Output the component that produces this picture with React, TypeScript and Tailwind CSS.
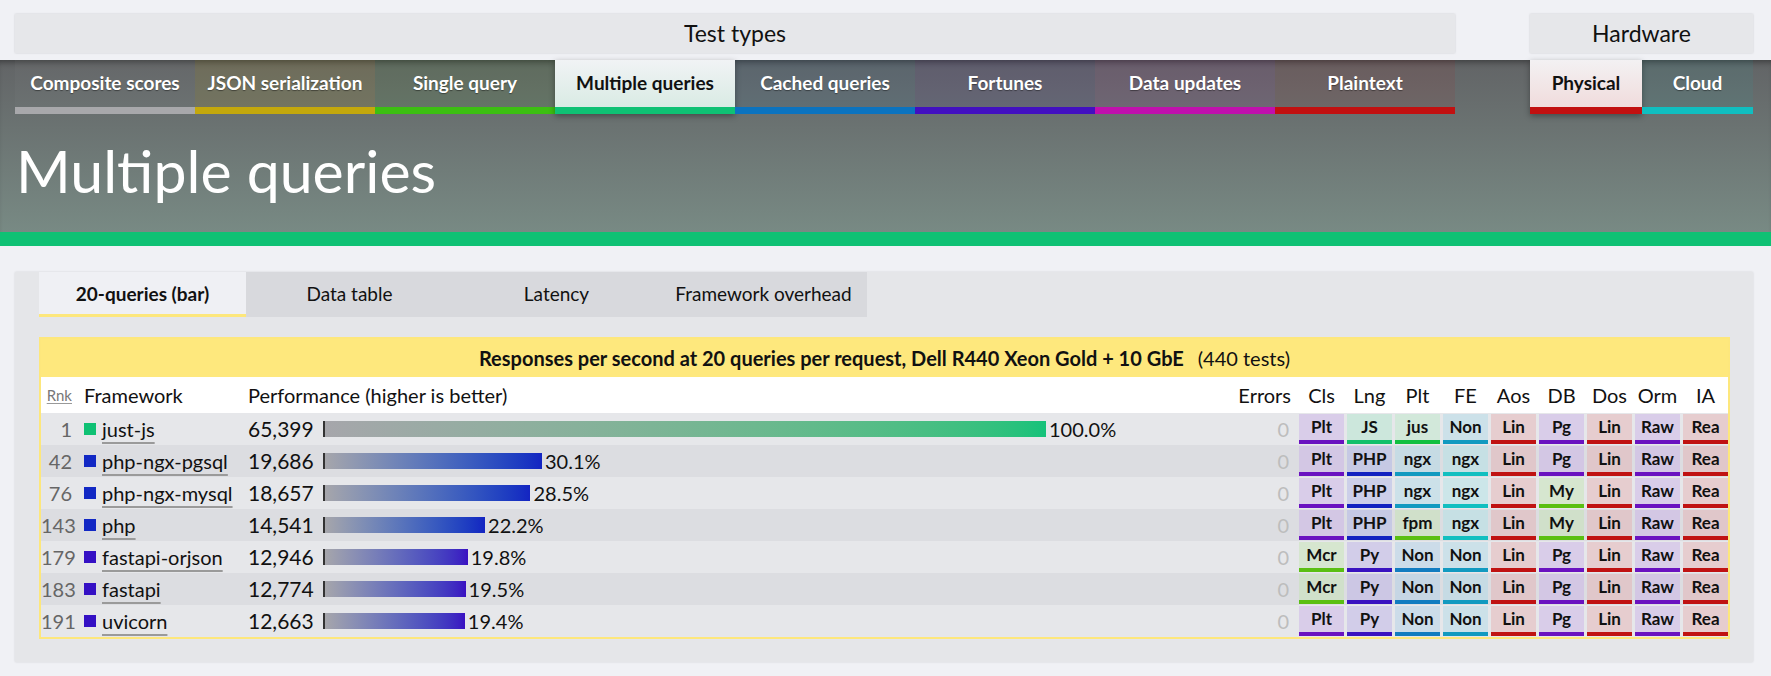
import React from 'react';

type Tab = { label: string; bar: string; bg: string; active?: boolean };

const testTabs: Tab[] = [
  { label: 'Composite scores', bar: 'border-[#a8a8ab]', bg: 'bg-[#a8a8ab]/5' },
  { label: 'JSON serialization', bar: 'border-[#c4a80c]', bg: 'bg-[#c4a80c]/12' },
  { label: 'Single query', bar: 'border-[#3cbf12]', bg: 'bg-[#3cbf12]/8' },
  { label: 'Multiple queries', bar: 'border-[#0fc174]', bg: '', active: true },
  { label: 'Cached queries', bar: 'border-[#0b73bf]', bg: 'bg-[#0b73bf]/8' },
  { label: 'Fortunes', bar: 'border-[#4210c0]', bg: 'bg-[#4210c0]/8' },
  { label: 'Data updates', bar: 'border-[#c010ad]', bg: 'bg-[#c010ad]/8' },
  { label: 'Plaintext', bar: 'border-[#c21010]', bg: 'bg-[#c21010]/8' },
];

// badge colours: [background tint, bottom bar]
const badge: Record<string, string> = {
  purple: 'bg-[#6a12c0]/15 border-[#6a12c0]',
  red: 'bg-[#c01212]/15 border-[#c01212]',
  js: 'bg-[#12c06a]/15 border-[#12c06a]',
  jus: 'bg-[#12c040]/12 border-[#12c040]',
  php: 'bg-[#1222c0]/15 border-[#1222c0]',
  py: 'bg-[#3a12c0]/15 border-[#3a12c0]',
  sky: 'bg-[#129ac0]/15 border-[#129ac0]',
  cyan: 'bg-[#12bfc0]/15 border-[#12bfc0]',
  blue: 'bg-[#127cc0]/15 border-[#127cc0]',
  lime: 'bg-[#5abf12]/15 border-[#5abf12]',
};

type Cell = [string, keyof typeof badge];

const cols = ['Cls', 'Lng', 'Plt', 'FE', 'Aos', 'DB', 'Dos', 'Orm', 'IA'];

const tail: Cell[] = [['Lin', 'red'], ['Pg', 'purple'], ['Lin', 'red'], ['Raw', 'purple'], ['Rea', 'red']];
const tailMy: Cell[] = [['Lin', 'red'], ['My', 'lime'], ['Lin', 'red'], ['Raw', 'purple'], ['Rea', 'red']];

const rows = [
  {
    rank: 1, name: 'just-js', rps: '65,399', pct: 100.0, sq: 'bg-[#0fc174]', bar: 'to-[#14c27a]',
    cells: [['Plt', 'purple'], ['JS', 'js'], ['jus', 'jus'], ['Non', 'sky'], ...tail] as Cell[],
  },
  {
    rank: 42, name: 'php-ngx-pgsql', rps: '19,686', pct: 30.1, sq: 'bg-[#1228c4]', bar: 'to-[#1424c2]',
    cells: [['Plt', 'purple'], ['PHP', 'php'], ['ngx', 'sky'], ['ngx', 'cyan'], ...tail] as Cell[],
  },
  {
    rank: 76, name: 'php-ngx-mysql', rps: '18,657', pct: 28.5, sq: 'bg-[#1228c4]', bar: 'to-[#1424c2]',
    cells: [['Plt', 'purple'], ['PHP', 'php'], ['ngx', 'sky'], ['ngx', 'cyan'], ...tailMy] as Cell[],
  },
  {
    rank: 143, name: 'php', rps: '14,541', pct: 22.2, sq: 'bg-[#1228c4]', bar: 'to-[#1424c2]',
    cells: [['Plt', 'purple'], ['PHP', 'php'], ['fpm', 'lime'], ['ngx', 'cyan'], ...tailMy] as Cell[],
  },
  {
    rank: 179, name: 'fastapi-orjson', rps: '12,946', pct: 19.8, sq: 'bg-[#3410c4]', bar: 'to-[#3a0fc2]',
    cells: [['Mcr', 'lime'], ['Py', 'py'], ['Non', 'blue'], ['Non', 'sky'], ...tail] as Cell[],
  },
  {
    rank: 183, name: 'fastapi', rps: '12,774', pct: 19.5, sq: 'bg-[#3410c4]', bar: 'to-[#3a0fc2]',
    cells: [['Mcr', 'lime'], ['Py', 'py'], ['Non', 'blue'], ['Non', 'sky'], ...tail] as Cell[],
  },
  {
    rank: 191, name: 'uvicorn', rps: '12,663', pct: 19.4, sq: 'bg-[#3410c4]', bar: 'to-[#3a0fc2]',
    cells: [['Plt', 'purple'], ['Py', 'py'], ['Non', 'blue'], ['Non', 'sky'], ...tail] as Cell[],
  },
];

const BAR_MAX = 721;

export default function App() {
  return (
    <div className="min-h-screen bg-[#f0f1f5] font-['Lato',sans-serif] text-[#111]">
      {/* group labels */}
      <div className="flex h-[60px] pl-[15px] pt-[14px]">
        <div className="flex h-[39px] w-[1440px] items-center justify-center bg-[#e6e7ea] text-[23px] shadow-[0_0_2px_rgba(0,0,0,0.15)]">
          Test types
        </div>
        <div className="ml-[75px] flex h-[39px] w-[223px] items-center justify-center bg-[#e6e7ea] text-[23px] shadow-[0_0_2px_rgba(0,0,0,0.15)]">
          Hardware
        </div>
      </div>

      {/* header with tabs */}
      <header className="h-[172px] bg-linear-to-b from-[#626466] to-[#788a84] shadow-[inset_0_6px_6px_-4px_rgba(0,0,0,0.4)]">
        <div className="flex pl-[15px]">
          {testTabs.map((t) => (
            <div
              key={t.label}
              className={`flex h-[54px] w-[180px] items-center justify-center border-b-[7px] text-[19px] font-bold ${t.bar} ${
                t.active
                  ? 'bg-linear-to-b from-[#f1f3f5] to-[#d9ebe4] text-[#111] shadow-[0_2px_6px_rgba(0,0,0,0.35)]'
                  : `${t.bg} text-white [text-shadow:0_1px_1px_rgba(0,0,0,0.4)]`
              }`}
            >
              {t.label}
            </div>
          ))}
          <div className="w-[75px]" />
          <div className="flex h-[54px] w-[112px] items-center justify-center border-b-[7px] border-[#c21010] bg-linear-to-b from-[#f3f1f3] to-[#f0dcdc] text-[19px] font-bold shadow-[0_2px_6px_rgba(0,0,0,0.35)]">
            Physical
          </div>
          <div className="flex h-[54px] w-[111px] items-center justify-center border-b-[7px] border-[#10bec0] bg-[#10bec0]/8 text-[19px] font-bold text-white [text-shadow:0_1px_1px_rgba(0,0,0,0.4)]">
            Cloud
          </div>
        </div>
        <h1 className="pl-[16px] pt-[27px] text-[59px] font-normal leading-[60px] text-white">Multiple queries</h1>
      </header>
      <div className="h-[14px] bg-[#0fc174]" />

      {/* results panel */}
      <div className="pl-[15px] pt-[26px]">
        <div className="w-[1738px] bg-[#e5e6e9] pb-[23px] pl-[24px] pr-[23px] shadow-[0_0_2px_rgba(0,0,0,0.12)]">
          <div className="flex">
            <div className="flex h-[45px] w-[207px] items-center justify-center border-b-[3px] border-[#fde77c] bg-[#eff0f4] pt-[3px] text-[19px] font-bold">
              20-queries (bar)
            </div>
            {['Data table', 'Latency', 'Framework overhead'].map((l) => (
              <div key={l} className="flex h-[45px] w-[207px] items-center justify-center bg-[#d8d9dd] text-[19px]">
                {l}
              </div>
            ))}
          </div>

          <div className="mt-[20px] border-2 border-[#fde77c] bg-white">
            <div className="flex h-[38px] items-center justify-center bg-[#fee87d] text-[20px]">
              <span className="font-bold">Responses per second at 20 queries per request, Dell R440 Xeon Gold + 10 GbE</span>
              <span className="ml-[14px]">(440 tests)</span>
            </div>

            {/* column header */}
            <div className="flex h-[36px] items-center bg-white text-[20px]">
              <div className="w-[34px] pr-[3px] text-right text-[15px] text-[#777] underline decoration-[#999] underline-offset-2">Rnk</div>
              <div className="w-[173px] pl-[9px]">Framework</div>
              <div className="flex-1">Performance (higher is better)</div>
              <div className="w-[55px] text-right">Errors</div>
              <div className="ml-[8px] flex gap-[3px]">
                {cols.map((c) => (
                  <div key={c} className="w-[45px] text-center">{c}</div>
                ))}
              </div>
            </div>

            {rows.map((r, i) => (
              <div key={r.name} className={`flex h-[32px] items-center text-[20px] ${i % 2 === 0 ? 'bg-[#e6e7ea]' : 'bg-[#dcdde1]'}`}>
                <div className="w-[34px] pr-[3px] text-right text-[#666]">{r.rank}</div>
                <div className="flex w-[173px] items-center pl-[9px]">
                  <span className={`mr-[6px] h-[12px] w-[12px] shrink-0 ${r.sq}`} />
                  <span className="whitespace-nowrap underline decoration-[#9a9a9a] decoration-2 underline-offset-[5px]">{r.name}</span>
                </div>
                <div className="flex flex-1 items-center">
                  <div className="w-[75px] text-[21px]">{r.rps}</div>
                  <div className="h-[16px] w-[2px] bg-[#333]" />
                  <div
                    className={`h-[16px] bg-linear-to-r from-[#a6a6ab] ${r.bar}`}
                    style={{ width: `${(r.pct / 100) * BAR_MAX}px` }}
                  />
                  <span className="ml-[3px]">{r.pct.toFixed(1)}%</span>
                </div>
                <div className="w-[55px] pr-[2px] text-right text-[#bdbdbd]">0</div>
                <div className="ml-[8px] flex gap-[3px]">
                  {r.cells.map(([txt, c], j) => (
                    <div key={j} className="h-[30px] w-[45px] bg-white/30">
                      <div className={`flex h-[30px] w-[45px] items-center justify-center border-b-4 text-[17px] font-bold ${badge[c]}`}>
                        {txt}
                      </div>
                    </div>
                  ))}
                </div>
              </div>
            ))}
          </div>
        </div>
      </div>
    </div>
  );
}
